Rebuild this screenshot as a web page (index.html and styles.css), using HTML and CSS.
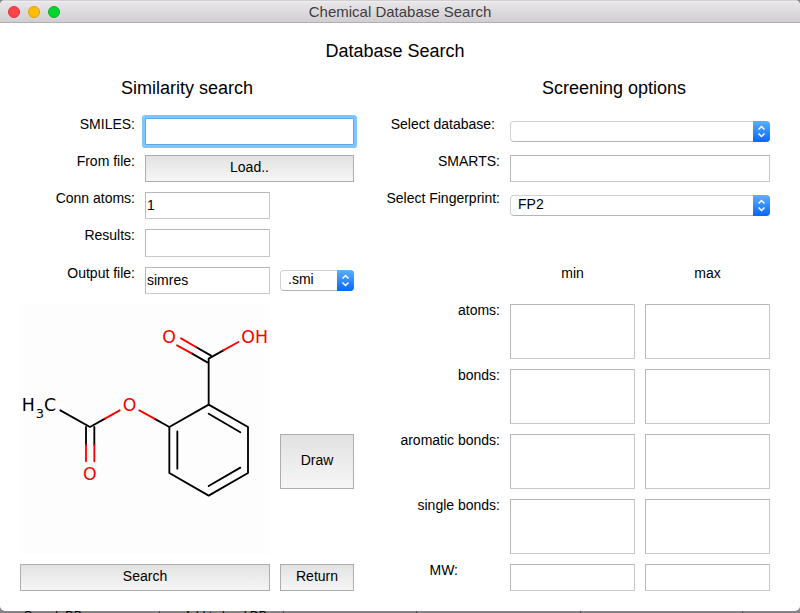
FILE: index.html
```html
<!DOCTYPE html>
<html lang="en">
<head>
<meta charset="utf-8">
<title>Chemical Database Search</title>
<link rel="stylesheet" href="styles.css">
</head>
<body>
<div class="window">
  <header class="titlebar">
    <div class="lights">
      <button class="light close" type="button" aria-label="Close"></button>
      <button class="light minimize" type="button" aria-label="Minimize"></button>
      <button class="light zoom" type="button" aria-label="Zoom"></button>
    </div>
    <div class="window-title">Chemical Database Search</div>
  </header>
  <main class="content">
    <h1>Database Search</h1>
    <div class="panels">
      <section class="panel">
        <h2>Similarity search</h2>
        <form class="fields similarity">
          <label for="smiles">SMILES:</label>
          <input class="box wide focused" id="smiles" type="text">
          <label for="load">From file:</label>
          <button class="push wide" id="load" type="button">Load..</button>
          <label for="conn">Conn atoms:</label>
          <input class="box" id="conn" type="text" value="1">
          <label for="results">Results:</label>
          <input class="box" id="results" type="text">
          <label for="output">Output file:</label>
          <input class="box" id="output" type="text" value="simres">
          <div class="popup">
            <select aria-label="Output format"><option>.smi</option></select>
            <svg class="arrows" viewBox="0 0 17 21" aria-hidden="true"><path d="M5.5 8.5 8.5 5.5 11.5 8.5M5.5 12.5 8.5 15.5 11.5 12.5"/></svg>
          </div>
          <svg class="molecule" viewBox="30 12 750 750" role="img" aria-label="Molecule structure">
            <g class="carbon">
              <path d="M596 314 714 381V519L596 587 478 519V381ZM596 341 691 397M691 503 596 558M502 506V394"/>
              <path d="M596 314V176M596 176 640 151M603 167 558 141M592 187 545 160"/>
              <path d="M478 381 433 356M151 331 240 381 285 356M228 381V435M253 381V435"/>
            </g>
            <g class="oxygen">
              <path d="M640 151 685 126M558 141 513 115M545 160 501 136"/>
              <path d="M433 356 388 331M285 356 329 331M228 435V484M253 435V484"/>
            </g>
            <g class="atoms red">
              <text x="457" y="128">O</text>
              <text x="694" y="128">OH</text>
              <text x="338" y="334">O</text>
              <text x="219" y="539">O</text>
            </g>
            <g class="atoms">
              <text x="35" y="334">H</text>
              <text class="sub" x="77" y="353">3</text>
              <text x="102" y="334">C</text>
            </g>
          </svg>
          <button class="push draw" type="button">Draw</button>
          <button class="push search" type="button">Search</button>
          <button class="push return" type="button">Return</button>
        </form>
      </section>
      <section class="panel screening-panel">
        <h2 class="screening-title">Screening options</h2>
        <form class="fields screening">
          <label class="inset" for="database">Select database:</label>
          <div class="popup wide">
            <select id="database"><option></option></select>
            <svg class="arrows" viewBox="0 0 17 21" aria-hidden="true"><path d="M5.5 8.5 8.5 5.5 11.5 8.5M5.5 12.5 8.5 15.5 11.5 12.5"/></svg>
          </div>
          <label for="smarts">SMARTS:</label>
          <input class="box wide" id="smarts" type="text">
          <label for="fingerprint">Select Fingerprint:</label>
          <div class="popup wide">
            <select id="fingerprint"><option>FP2</option></select>
            <svg class="arrows" viewBox="0 0 17 21" aria-hidden="true"><path d="M5.5 8.5 8.5 5.5 11.5 8.5M5.5 12.5 8.5 15.5 11.5 12.5"/></svg>
          </div>
          <div class="spacer"></div>
          <span class="range min">min</span>
          <span class="range">max</span>
          <label for="atoms">atoms:</label>
          <textarea class="box" id="atoms"></textarea>
          <textarea class="box" aria-label="atoms max"></textarea>
          <label for="bonds">bonds:</label>
          <textarea class="box" id="bonds"></textarea>
          <textarea class="box" aria-label="bonds max"></textarea>
          <label for="aromatic">aromatic bonds:</label>
          <textarea class="box" id="aromatic"></textarea>
          <textarea class="box" aria-label="aromatic bonds max"></textarea>
          <label for="single">single bonds:</label>
          <textarea class="box" id="single"></textarea>
          <textarea class="box" aria-label="single bonds max"></textarea>
          <label class="weight" for="mw">MW:</label>
          <input class="box" id="mw" type="text">
          <input class="box" type="text" aria-label="MW max">
        </form>
      </section>
    </div>
  </main>
</div>
<footer class="behind">
  <span>Search DB</span>
  <span>Add to local DB</span>
  <span></span>
  <span></span>
  <span></span>
</footer>
</body>
</html>
```
FILE: styles.css
```css
* {
  box-sizing: border-box;
}

body {
  margin: 0;
  min-height: 100vh;
  background: #858385;
  color: #000;
  font: 14px/14px "Liberation Sans", Arial, sans-serif;
}

.window {
  min-height: calc(100vh - 2px);
  border-radius: 5px;
  background: #fff;
  overflow: hidden;
}

.behind {
  display: grid;
  grid-template-columns: 160fr 124fr 133fr 164fr 162fr 57fr;
  height: 2px;
  overflow: hidden;
  font-size: 12px;
  line-height: 10px;
}

.behind span {
  padding-left: 24px;
  border-right: 1px solid #4c4b4c;
  white-space: nowrap;
}

.titlebar {
  display: grid;
  grid-template-columns: 1fr auto 1fr;
  align-items: center;
  height: 23px;
  padding: 1px 8px 0;
  border-top: 1px solid #d0ced0;
  border-bottom: 1px solid #b1afb1;
  background: linear-gradient(#f5f4f5 0, #e8e6e9 1px, #d0ced1 100%);
}

.lights {
  display: flex;
  gap: 8px;
}

.light {
  width: 12px;
  height: 12px;
  padding: 0;
  border: 1px solid;
  border-radius: 50%;
}

.close {
  border-color: #e2333c;
  background: #ff4349;
}

.minimize {
  border-color: #e5a005;
  background: #ffbd05;
}

.zoom {
  border-color: #09b424;
  background: #05d52e;
}

.window-title {
  color: #3f3d40;
  font-size: 15px;
  line-height: 18px;
}

.content {
  padding: 18px 30px 20px 20px;
}

h1,
h2 {
  margin: 0;
  font-size: 18px;
  font-weight: 400;
  line-height: 20px;
  text-align: center;
}

h1 {
  margin-bottom: 17px;
}

h2 {
  margin-bottom: 20px;
}

.panels {
  display: flex;
  gap: 26px;
}

.panel {
  flex: 334 1 0;
  min-width: 0;
}

.screening-panel {
  flex-grow: 390;
}

.screening-title {
  padding-left: 78px;
}

.fields {
  display: grid;
  grid-template-rows: 27px 27px 27px 28px 27px repeat(4, 55px) 27px;
  gap: 10px;
}

.similarity {
  grid-template-columns: minmax(0, 115fr) minmax(0, 125fr) minmax(0, 74fr);
}

.screening {
  grid-template-columns: minmax(0, 120fr) minmax(0, 125fr) minmax(0, 125fr);
}

label,
.range {
  line-height: 12px;
  white-space: nowrap;
}

label {
  grid-column: 1;
  text-align: right;
}

.inset {
  padding-right: 5px;
}

.weight {
  padding-right: 42px;
}

.wide {
  grid-column: 2 / 4;
}

.box {
  width: 100%;
  height: 100%;
  margin: 0;
  padding: 0 1px 2px;
  border: 1px solid #c8c8c8;
  border-top-color: #b8b8b8;
  border-left-color: #b8b8b8;
  border-radius: 0;
  background: #fff;
  color: inherit;
  font: inherit;
  outline: 0;
  resize: none;
}

.focused,
.box:focus {
  border-color: #5fa7e5;
  border-radius: 1px;
  box-shadow: 0 0 0 3px #7fc6ff;
}

.push {
  padding: 0 0 3px;
  border: 1px solid #adadad;
  border-radius: 0;
  background: linear-gradient(#e2e2e2, #f6f6f6);
  color: inherit;
  font: inherit;
}

.popup {
  position: relative;
  align-self: center;
  height: 21px;
}

.popup select {
  width: 100%;
  height: 100%;
  padding: 0 20px 3px 7px;
  border: 1px solid #d0d0d0;
  border-bottom-color: #b5b5b5;
  border-radius: 4px;
  background: #fff;
  color: inherit;
  font: inherit;
  appearance: none;
}

.arrows {
  position: absolute;
  top: 0;
  right: 0;
  width: 17px;
  height: 21px;
  border-radius: 0 4px 4px 0;
  background: linear-gradient(#5cb0fb, #0567ff);
  fill: none;
  stroke: #fff;
  stroke-width: 1.5;
  pointer-events: none;
}

.molecule {
  grid-column: 1 / 3;
  grid-row: 6 / 10;
  width: 100%;
  height: 100%;
  background: #fdfdfd;
}

.molecule path {
  fill: none;
  stroke-width: 5.5;
  stroke-linecap: round;
  stroke-linejoin: round;
}

.carbon {
  stroke: #000;
}

.oxygen {
  stroke: #f00;
}

.atoms {
  font: 52px "DejaVu Sans", sans-serif;
}

.red {
  fill: #f00;
}

.sub {
  font-size: 39px;
}

.draw {
  grid-column: 3;
  grid-row: 8;
}

.search {
  grid-column: 1 / 3;
  grid-row: 10;
}

.return {
  grid-column: 3;
  grid-row: 10;
}

.spacer {
  grid-column: 1 / -1;
}

.range {
  text-align: center;
}

.min {
  grid-column: 2;
}
```
